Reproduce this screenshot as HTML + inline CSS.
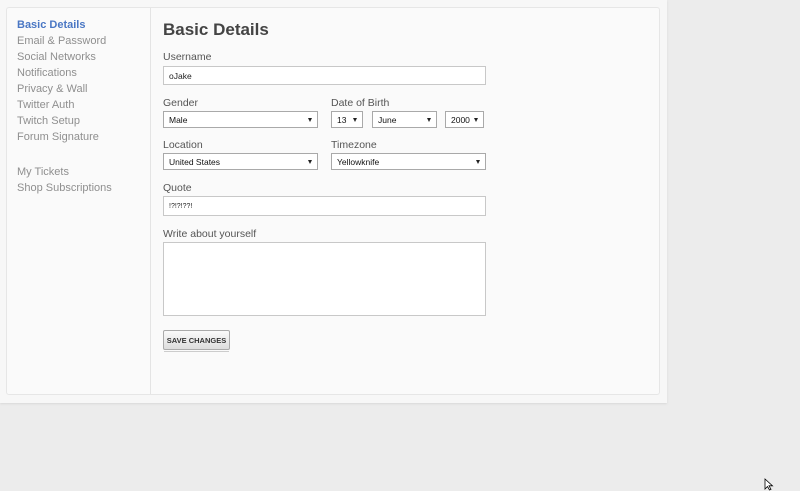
<!DOCTYPE html>
<html><head><style>
*{box-sizing:border-box;margin:0;padding:0}
body{width:800px;height:490px;background:#ececec;font-family:"Liberation Sans",sans-serif;position:relative;overflow:hidden}
.outer{position:absolute;left:0;top:0;width:667px;height:403px;background:#f7f7f7;box-shadow:0 1px 2px #d8d8d8}
.card{position:absolute;left:6px;top:7px;width:654px;height:388px;background:#fafafa;border:1px solid #e6e6e6;border-radius:3px}
.side{position:absolute;left:0;top:0;width:144px;height:100%;border-right:1px solid #e4e4e4}
.side a{position:absolute;left:10px;font-size:11px;color:#8f8f8f;text-decoration:none;white-space:nowrap}
.abs{position:absolute}
.lbl{position:absolute;font-size:10.5px;color:#555}
.inp{position:absolute;background:#fff;border:1px solid #c8c8c8;font-size:8.5px;color:#222;padding-left:5px;display:flex;align-items:center}
.sel{position:absolute;background:#fff;border:1px solid #a9a9a9;font-size:8.5px;color:#111;padding-left:5px;display:flex;align-items:center}
.sel:after{content:"";position:absolute;right:5px;top:6px;border-left:2.5px solid transparent;border-right:2.5px solid transparent;border-top:4px solid #222}
</style></head><body>
<div class="outer"></div>
<div class="card">
<div class="side">
<a style="top:11px;color:#4a77c4;font-weight:bold">Basic Details</a>
<a style="top:27px">Email &amp; Password</a>
<a style="top:43px">Social Networks</a>
<a style="top:59px">Notifications</a>
<a style="top:75px">Privacy &amp; Wall</a>
<a style="top:91px">Twitter Auth</a>
<a style="top:107px">Twitch Setup</a>
<a style="top:123px">Forum Signature</a>
<a style="top:158px">My Tickets</a>
<a style="top:174px">Shop Subscriptions</a>
</div>
</div>
<div class="abs" style="left:163px;top:20px;font-size:17px;font-weight:bold;color:#444">Basic Details</div>
<div class="lbl" style="left:163px;top:51px">Username</div>
<div class="inp" style="left:163px;top:66px;width:323px;height:19px">oJake</div>
<div class="lbl" style="left:163px;top:97px">Gender</div>
<div class="sel" style="left:163px;top:111px;width:155px;height:17px">Male</div>
<div class="lbl" style="left:331px;top:97px">Date of Birth</div>
<div class="sel" style="left:331px;top:111px;width:32px;height:17px">13</div>
<div class="sel" style="left:372px;top:111px;width:65px;height:17px">June</div>
<div class="sel" style="left:445px;top:111px;width:39px;height:17px">2000</div>
<div class="lbl" style="left:163px;top:139px">Location</div>
<div class="sel" style="left:163px;top:153px;width:155px;height:17px">United States</div>
<div class="lbl" style="left:331px;top:139px">Timezone</div>
<div class="sel" style="left:331px;top:153px;width:155px;height:17px">Yellowknife</div>
<div class="lbl" style="left:163px;top:182px">Quote</div>
<div class="inp" style="left:163px;top:196px;width:323px;height:20px;font-size:7px">!?!?!??!</div>
<div class="lbl" style="left:163px;top:228px">Write about yourself</div>
<div class="inp" style="left:163px;top:242px;width:323px;height:74px"></div>
<div class="abs" style="left:163px;top:330px;width:67px;height:20px;border:1px solid #aaa;border-radius:2px;background:linear-gradient(#fafafa,#ddd);font-size:7.5px;font-weight:bold;color:#333;display:flex;align-items:center;justify-content:center">SAVE CHANGES</div>
<div class="abs" style="left:164px;top:351px;width:65px;height:1px;background:#ccc"></div>
<svg class="abs" style="left:764px;top:478px" width="10" height="13"><path d="M1 1 L1 11 L3.5 8.5 L5.5 12 L7 11.3 L5 7.8 L8.5 7.8 Z" fill="#fff" stroke="#000" stroke-width="0.8"/></svg>
</body></html>
